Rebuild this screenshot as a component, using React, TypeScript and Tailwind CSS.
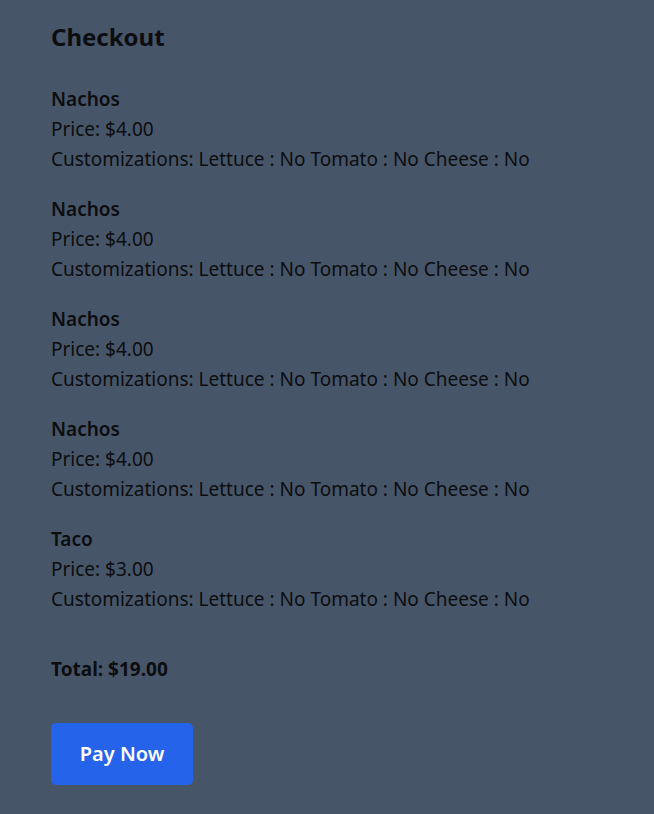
const items = [
  { name: "Nachos", price: 4 },
  { name: "Nachos", price: 4 },
  { name: "Nachos", price: 4 },
  { name: "Nachos", price: 4 },
  { name: "Taco", price: 3 },
];

export default function App() {
  const total = items.reduce((sum, i) => sum + i.price, 0);

  return (
    <div
      className="min-h-screen bg-[#475569] text-[#0b0d10] px-[51px] pt-[21px] pb-6"
      style={{ fontFamily: '"Noto Sans", "Open Sans", sans-serif' }}
    >
      <h1 className="text-[24px] leading-[32px] font-bold mb-[31px]">Checkout</h1>

      <div className="flex flex-col gap-[20px]">
        {items.map((item, idx) => (
          <div key={idx} className="text-[19px] leading-[30px]">
            <div className="font-semibold">{item.name}</div>
            <div>Price: ${item.price.toFixed(2)}</div>
            <div>Customizations: Lettuce : No Tomato : No Cheese : No</div>
          </div>
        ))}
      </div>

      <div className="mt-[40px] text-[19px] leading-[30px] font-bold">
        Total: ${total.toFixed(2)}
      </div>

      <button className="mt-[39px] w-[142px] h-[62px] rounded-[5px] bg-[#2563eb] text-white text-[20px] font-semibold">
        Pay Now
      </button>
    </div>
  );
}
